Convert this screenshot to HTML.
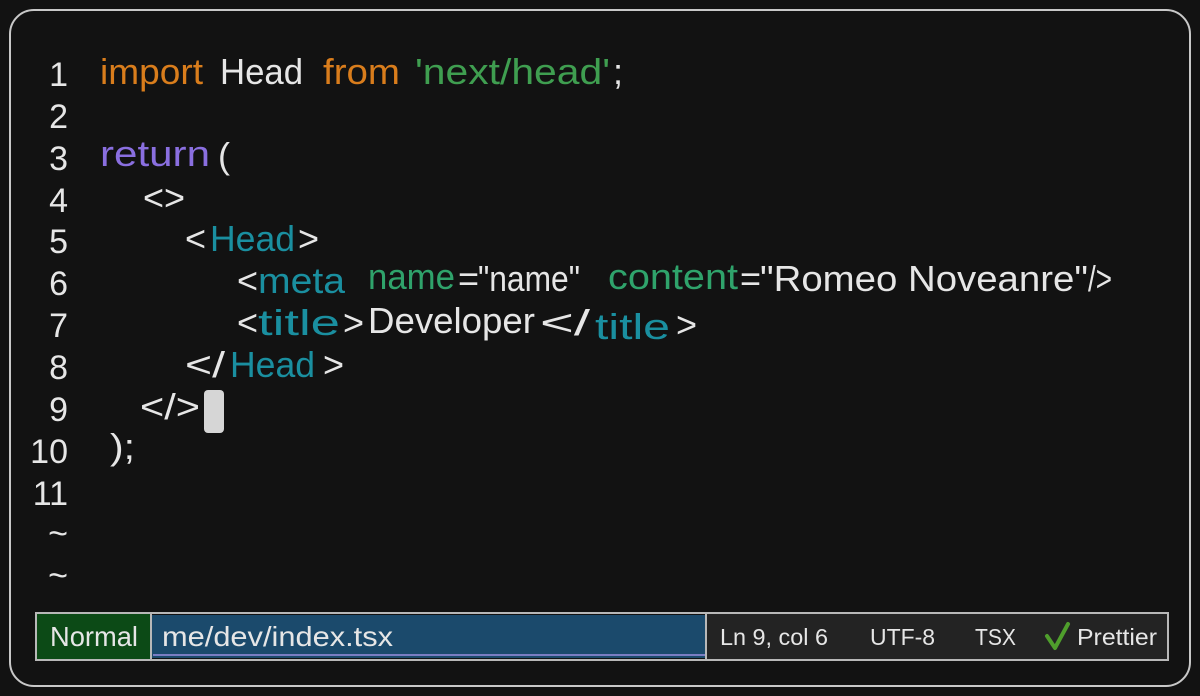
<!DOCTYPE html>
<html><head><meta charset="utf-8"><style>
html,body{margin:0;padding:0;background:#121212;width:1200px;height:696px;overflow:hidden}
svg{display:block}
text{font-family:"Liberation Sans",sans-serif}
</style></head><body>
<svg width="1200" height="696" viewBox="0 0 1200 696" xmlns="http://www.w3.org/2000/svg">
<rect x="0" y="0" width="1200" height="696" fill="#121212"/>
<rect x="10" y="10" width="1180" height="676" rx="24" fill="#121212" stroke="#c8c8c8" stroke-width="2"/>
<g font-size="34" fill="#e6e6e6" text-anchor="end">
<text x="68" y="86">1</text><text x="68" y="128">2</text><text x="68" y="170">3</text>
<text x="68" y="212">4</text><text x="68" y="253">5</text><text x="68" y="295">6</text>
<text x="68" y="337">7</text><text x="68" y="379">8</text><text x="68" y="421">9</text>
<text x="68" y="463">10</text><text x="68" y="505">11</text>
<text x="68" y="545">~</text><text x="68" y="587">~</text>
</g>
<g font-size="36">
<text x="100" y="84" fill="#d97d1c" textLength="103" lengthAdjust="spacingAndGlyphs">import</text>
<text x="220" y="84" fill="#e6e6e6" textLength="83" lengthAdjust="spacingAndGlyphs">Head</text>
<text x="323" y="84" fill="#d97d1c" textLength="77" lengthAdjust="spacingAndGlyphs">from</text>
<text x="415" y="84" fill="#3f9e50" textLength="195" lengthAdjust="spacingAndGlyphs">'next/head'</text>
<text x="613" y="84" fill="#e6e6e6">;</text>

<text x="100" y="166" fill="#8a6fe0" textLength="110" lengthAdjust="spacingAndGlyphs">return</text>
<text x="218" y="168" fill="#e6e6e6">(</text>

<text x="143" y="210" fill="#e6e6e6" textLength="42" lengthAdjust="spacingAndGlyphs">&lt;&gt;</text>

<text x="185" y="251" fill="#e6e6e6">&lt;</text>
<text x="210" y="251" fill="#1a8fa0" textLength="85" lengthAdjust="spacingAndGlyphs">Head</text>
<text x="298" y="251" fill="#e6e6e6">&gt;</text>

<text x="237" y="293" fill="#e6e6e6">&lt;</text>
<text x="258" y="293" fill="#1a8fa0" textLength="87" lengthAdjust="spacingAndGlyphs">meta</text>
<text x="368" y="289" fill="#2fa36b" textLength="87" lengthAdjust="spacingAndGlyphs">name</text>
<text x="458" y="291" fill="#e6e6e6">=</text>
<text x="478" y="291" fill="#e6e6e6" textLength="102" lengthAdjust="spacingAndGlyphs">"name"</text>
<text x="608" y="289" fill="#2fa36b" textLength="130" lengthAdjust="spacingAndGlyphs">content</text>
<text x="740" y="291" fill="#e6e6e6">=</text>
<text x="760" y="291" fill="#e6e6e6" textLength="328" lengthAdjust="spacingAndGlyphs">"Romeo Noveanre"</text>
<text x="1088" y="291" fill="#e6e6e6" textLength="24" lengthAdjust="spacingAndGlyphs">/&gt;</text>

<text x="237" y="335" fill="#e6e6e6">&lt;</text>
<text x="258" y="335" fill="#1a8fa0" textLength="82" lengthAdjust="spacingAndGlyphs">title</text>
<text x="343" y="335" fill="#e6e6e6">&gt;</text>
<text x="368" y="333" fill="#e6e6e6" textLength="167" lengthAdjust="spacingAndGlyphs">Developer</text>
<text x="540" y="335" fill="#e6e6e6" textLength="50" lengthAdjust="spacingAndGlyphs">&lt;/</text>
<text x="595" y="339" fill="#1a8fa0" textLength="75" lengthAdjust="spacingAndGlyphs">title</text>
<text x="676" y="337" fill="#e6e6e6">&gt;</text>

<text x="185" y="377" fill="#e6e6e6" textLength="40" lengthAdjust="spacingAndGlyphs">&lt;/</text>
<text x="230" y="377" fill="#1a8fa0" textLength="85" lengthAdjust="spacingAndGlyphs">Head</text>
<text x="323" y="377" fill="#e6e6e6">&gt;</text>

<text x="140" y="419" fill="#e6e6e6" textLength="60" lengthAdjust="spacingAndGlyphs">&lt;/&gt;</text>
<text x="110" y="459" fill="#e6e6e6" textLength="25" lengthAdjust="spacingAndGlyphs">);</text>
</g>
<rect x="204" y="390" width="20" height="43" rx="4" fill="#d6d6d6"/>

<rect x="706" y="614" width="461" height="45" fill="#232323"/>
<rect x="152" y="615" width="554" height="43" fill="#1b4a6c"/>
<rect x="37" y="614" width="113" height="45" fill="#0c4a16"/>
<rect x="36" y="613" width="1132" height="47" fill="none" stroke="#b8b8b8" stroke-width="2"/>
<line x1="151" y1="613" x2="151" y2="660" stroke="#b8b8b8" stroke-width="2"/>
<line x1="706" y1="613" x2="706" y2="660" stroke="#b8b8b8" stroke-width="2"/>
<line x1="153" y1="655" x2="705" y2="655" stroke="#9a90e0" stroke-width="1.5"/>
<g font-size="28" fill="#e6e6e6">
<text x="50" y="646" textLength="88" lengthAdjust="spacingAndGlyphs">Normal</text>
<text x="162" y="646" textLength="231" lengthAdjust="spacingAndGlyphs">me/dev/index.tsx</text>
</g>
<g font-size="23" fill="#e6e6e6">
<text x="720" y="645" textLength="108" lengthAdjust="spacingAndGlyphs">Ln 9, col 6</text>
<text x="870" y="645" textLength="65" lengthAdjust="spacingAndGlyphs">UTF-8</text>
<text x="975" y="645" textLength="41" lengthAdjust="spacingAndGlyphs">TSX</text>
<text x="1077" y="645" textLength="80" lengthAdjust="spacingAndGlyphs">Prettier</text>
</g>
<path d="M1047 636 L1055 648 L1068 624" fill="none" stroke="#4f9e2c" stroke-width="4" stroke-linecap="round" stroke-linejoin="round"/>
</svg>
</body></html>
